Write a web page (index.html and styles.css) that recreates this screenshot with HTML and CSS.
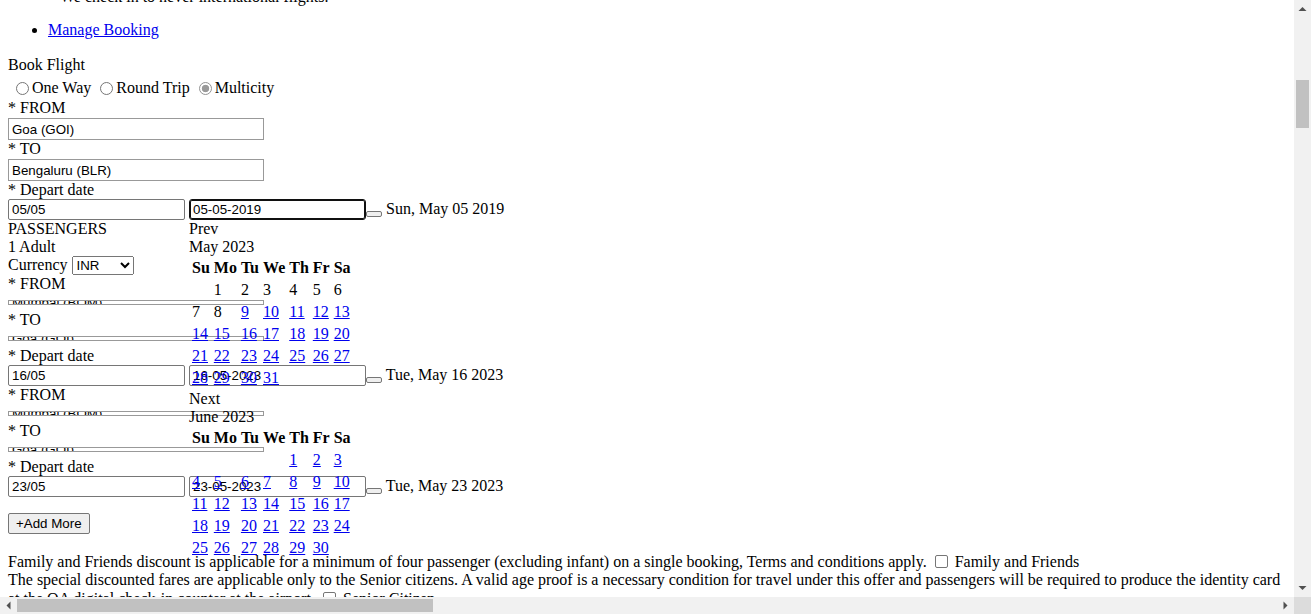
FILE: index.html
```html
<!DOCTYPE html>
<html lang="en">
<head>
<meta charset="utf-8">
<title>Book Flight</title>
<link rel="stylesheet" href="styles.css">
</head>
<body>
<div class="window">
  <div class="viewport">
    <div class="page">
      <div class="cut">We check in to never international flights.</div>
      <ul class="menu">
        <li><a href="#">Manage Booking</a></li>
      </ul>

      <form class="booking">
        <div>Book Flight</div>
        <div class="trip"><input type="radio" class="radio" name="trip">One Way <input type="radio" class="radio" name="trip">Round Trip <input type="radio" class="radio" name="trip" checked>Multicity</div>

        <div>* FROM</div>
        <input class="field" type="text" value="Goa (GOI)">
        <div>* TO</div>
        <input class="field" type="text" value="Bengaluru (BLR)">
        <div>* Depart date</div>
        <div class="date-row"><input class="date" type="text" value="05/05"> <input class="date focused" type="text" value="05-05-2019"><button class="pick" type="button"></button> Sun, May 05 2019</div>

        <div>PASSENGERS</div>
        <div>1 Adult</div>
        <div class="cur-row">Currency <select class="cur"><option>INR</option></select></div>

        <div>* FROM</div>
        <input class="mini" type="text" value="Mumbai (BOM)">
        <div>* TO</div>
        <input class="mini" type="text" value="Goa (GOI)">
        <div>* Depart date</div>
        <div class="date-row"><input class="date" type="text" value="16/05"> <input class="date" type="text" value="16-05-2023"><button class="pick" type="button"></button> Tue, May 16 2023</div>

        <div>* FROM</div>
        <input class="mini" type="text" value="Mumbai (BOM)">
        <div>* TO</div>
        <input class="mini" type="text" value="Goa (GOI)">
        <div>* Depart date</div>
        <div class="date-row"><input class="date" type="text" value="23/05"> <input class="date" type="text" value="23-05-2023"><button class="pick" type="button"></button> Tue, May 23 2023</div>

        <button class="add" type="button">+Add More</button>
      </form>

      <div class="notes">
        <div>Family and Friends discount is applicable for a minimum of four passenger (excluding infant) on a single booking, Terms and conditions apply. <input type="checkbox" class="check"> Family and Friends</div>
        <div>The special discounted fares are applicable only to the Senior citizens. A valid age proof is a necessary condition for travel under this offer and passengers will be required to produce the identity card at the OA digital check-in counter at the airport. <input type="checkbox" class="check"> Senior Citizen</div>
      </div>

      <div class="datepicker">
        <div class="dp-group">
          <a class="dp-nav">Prev</a>
          <div class="dp-title">May 2023</div>
          <table class="dp-cal">
            <thead><tr><th>Su</th><th>Mo</th><th>Tu</th><th>We</th><th>Th</th><th>Fr</th><th>Sa</th></tr></thead>
            <tbody>
              <tr><td>&nbsp;</td><td>1</td><td>2</td><td>3</td><td>4</td><td>5</td><td>6</td></tr>
              <tr><td>7</td><td>8</td><td><a href="#">9</a></td><td><a href="#">10</a></td><td><a href="#">11</a></td><td><a href="#">12</a></td><td><a href="#">13</a></td></tr>
              <tr><td><a href="#">14</a></td><td><a href="#">15</a></td><td><a href="#">16</a></td><td><a href="#">17</a></td><td><a href="#">18</a></td><td><a href="#">19</a></td><td><a href="#">20</a></td></tr>
              <tr><td><a href="#">21</a></td><td><a href="#">22</a></td><td><a href="#">23</a></td><td><a href="#">24</a></td><td><a href="#">25</a></td><td><a href="#">26</a></td><td><a href="#">27</a></td></tr>
              <tr><td><a href="#">28</a></td><td><a href="#">29</a></td><td><a href="#">30</a></td><td><a href="#">31</a></td><td>&nbsp;</td><td>&nbsp;</td><td>&nbsp;</td></tr>
            </tbody>
          </table>
        </div>
        <div class="dp-group">
          <a class="dp-nav">Next</a>
          <div class="dp-title">June 2023</div>
          <table class="dp-cal">
            <thead><tr><th>Su</th><th>Mo</th><th>Tu</th><th>We</th><th>Th</th><th>Fr</th><th>Sa</th></tr></thead>
            <tbody>
              <tr><td>&nbsp;</td><td>&nbsp;</td><td>&nbsp;</td><td>&nbsp;</td><td><a href="#">1</a></td><td><a href="#">2</a></td><td><a href="#">3</a></td></tr>
              <tr><td><a href="#">4</a></td><td><a href="#">5</a></td><td><a href="#">6</a></td><td><a href="#">7</a></td><td><a href="#">8</a></td><td><a href="#">9</a></td><td><a href="#">10</a></td></tr>
              <tr><td><a href="#">11</a></td><td><a href="#">12</a></td><td><a href="#">13</a></td><td><a href="#">14</a></td><td><a href="#">15</a></td><td><a href="#">16</a></td><td><a href="#">17</a></td></tr>
              <tr><td><a href="#">18</a></td><td><a href="#">19</a></td><td><a href="#">20</a></td><td><a href="#">21</a></td><td><a href="#">22</a></td><td><a href="#">23</a></td><td><a href="#">24</a></td></tr>
              <tr><td><a href="#">25</a></td><td><a href="#">26</a></td><td><a href="#">27</a></td><td><a href="#">28</a></td><td><a href="#">29</a></td><td><a href="#">30</a></td><td>&nbsp;</td></tr>
            </tbody>
          </table>
        </div>
      </div>
    </div>
  </div>

  <div class="vbar">
    <div class="sb-btn"><svg width="17" height="17" viewBox="0 0 17 17"><polygon points="4.5,11 8.5,7 12.5,11" fill="#505050"/></svg></div>
    <div class="vtrack"><div class="vthumb"></div></div>
    <div class="sb-btn"><svg width="17" height="17" viewBox="0 0 17 17"><polygon points="4.5,6 8.5,10 12.5,6" fill="#505050"/></svg></div>
  </div>
  <div class="hbar">
    <div class="sb-btn"><svg width="17" height="17" viewBox="0 0 17 17"><polygon points="10.5,4.5 6.5,8.5 10.5,12.5" fill="#505050"/></svg></div>
    <div class="htrack"><div class="hthumb"></div></div>
    <div class="sb-btn"><svg width="17" height="17" viewBox="0 0 17 17"><polygon points="6.5,4.5 10.5,8.5 6.5,12.5" fill="#505050"/></svg></div>
  </div>
  <div class="corner"></div>
</div>
</body>
</html>
```

FILE: styles.css
```css
html, body {
  margin: 0;
  padding: 0;
  overflow: hidden;
  background: #fff;
}
body {
  font-family: "Liberation Serif", "Times New Roman", serif;
  font-size: 16px;
  line-height: 18px;
  color: #000;
}
.window {
  display: grid;
  grid-template-columns: 1294px 17px;
  grid-template-rows: 597px 17px;
  width: 1311px;
  height: 614px;
}
.viewport {
  overflow: hidden;
  position: relative;
}
.page {
  position: relative;
  padding: 0 8px;
}
.cut {
  margin-top: -12px;
  padding-left: 52px;
  white-space: nowrap;
}
.menu {
  margin: 15px 0 17px;
  padding-left: 40px;
}
a {
  color: #0000ee;
  text-decoration: underline;
}
.booking {
  margin: 0;
}
.trip {
  height: 18px;
  padding: 5px 0 2px 3px;
  white-space: nowrap;
}
.radio {
  -webkit-appearance: none;
  appearance: none;
  box-sizing: border-box;
  width: 13px;
  height: 13px;
  margin: 3px 3px 0 5px;
  border: 1px solid #767676;
  border-radius: 50%;
  background: #fff;
  vertical-align: -2px;
}
.radio:checked {
  border-color: #949494;
  background: radial-gradient(circle at center, #9a9a9a 0 3.4px, #fff 4.1px);
}
.field {
  display: block;
  box-sizing: border-box;
  width: 256px;
  height: 22px;
  margin: 1px 0 0;
  padding: 0 3px;
  border: 1px solid #999;
  background: #fff;
  color: #000;
  font: 13.333px "Liberation Sans", Arial, sans-serif;
}
.date-row {
  height: 21px;
  white-space: nowrap;
}
.date {
  box-sizing: border-box;
  width: 177px;
  height: 21px;
  margin: 0;
  padding: 0 3px;
  border: 1px solid #767676;
  border-radius: 2px;
  background: #fff;
  color: #000;
  font: 13.333px "Liberation Sans", Arial, sans-serif;
}
.focused {
  border-color: #101010;
  border-radius: 3px;
  box-shadow: inset 0 0 0 1px #101010;
  outline: none;
}
.pick {
  box-sizing: border-box;
  width: 16px;
  height: 6px;
  margin: 0;
  padding: 0;
  border: 1px solid #767676;
  border-radius: 2px;
  background: #efefef;
  vertical-align: -2px;
}
.cur-row {
  height: 19px;
}
.cur {
  box-sizing: border-box;
  width: 62px;
  height: 19px;
  margin: 0;
  font: 13.333px "Liberation Sans", Arial, sans-serif;
  color: #000;
}
.mini {
  display: block;
  box-sizing: border-box;
  width: 256px;
  height: 5px;
  margin: 7px 0 6px;
  padding: 0 3px;
  border: 1px solid #999;
  background: #fff;
  color: #000;
  font: 13.333px "Liberation Sans", Arial, sans-serif;
}
.add {
  display: block;
  box-sizing: border-box;
  height: 21px;
  margin: 16px 0 0;
  padding: 0 7px;
  border: 1px solid #767676;
  border-radius: 2px;
  background: #efefef;
  color: #000;
  font: 13.333px "Liberation Sans", Arial, sans-serif;
}
.notes {
  margin-top: 18px;
}
.check {
  -webkit-appearance: none;
  appearance: none;
  box-sizing: border-box;
  width: 13px;
  height: 13px;
  margin: 3px 3px 3px 4px;
  border: 1px solid #767676;
  border-radius: 2px;
  background: #fff;
  vertical-align: -4px;
}
.datepicker {
  position: absolute;
  left: 189px;
  top: 232px;
}
.dp-nav {
  display: block;
  color: #000;
  text-decoration: none;
}
.dp-cal {
  border-collapse: separate;
  border-spacing: 2px;
}
.dp-cal th,
.dp-cal td {
  padding: 1px;
}
.dp-cal th {
  font-weight: bold;
}
.dp-cal td {
  text-align: left;
}
.vbar {
  display: flex;
  flex-direction: column;
  background: #f1f1f1;
}
.sb-btn {
  flex: none;
  width: 17px;
  height: 17px;
}
.sb-btn svg {
  display: block;
}
.vtrack {
  flex: 1;
}
.vthumb {
  height: 48px;
  margin: 63px 2px 0;
  background: #c1c1c1;
}
.hbar {
  display: flex;
  background: #f1f1f1;
}
.htrack {
  flex: 1;
  display: flex;
}
.hthumb {
  width: 416px;
  margin: 2px 0;
  background: #c1c1c1;
}
.corner {
  background: #dcdcdc;
}
```
